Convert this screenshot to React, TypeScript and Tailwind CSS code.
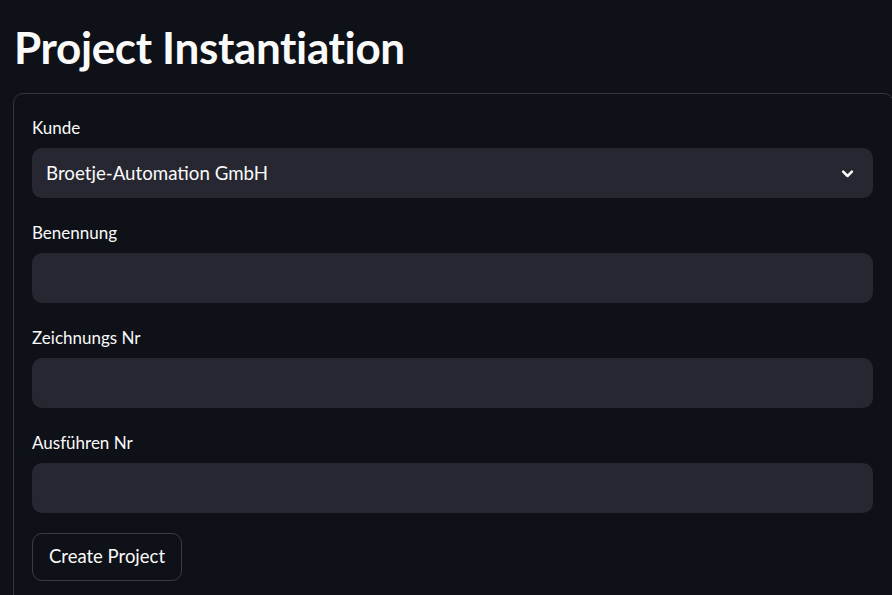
import React from "react";

function Field({ label }: { label: string }) {
  return (
    <div className="flex flex-col">
      <div className="h-[30px] flex items-center text-[17px] leading-none text-[#fafafa]">{label}</div>
      <div className="h-[50px] mt-[6px] rounded-[10px] bg-[#262730]" />
    </div>
  );
}

export default function App() {
  return (
    <div
      className="w-full min-h-[595px] bg-[#0e1117] overflow-hidden text-[#fafafa]"
      style={{ fontFamily: "Lato, 'Noto Sans', sans-serif" }}
    >
      <div className="pl-[13px]">
        <h1 className="h-[93px] pl-[1px] pt-[21px] text-[44px] font-bold leading-[52px] tracking-[-0.35px]">
          Project Instantiation
        </h1>
        <div className="w-[calc(100%+2px)] rounded-[10px] border border-[#35373d] pt-[18px] pl-[18px] pr-[20px] pb-[30px] flex flex-col gap-[19px]">
          <div className="flex flex-col">
            <div className="h-[30px] flex items-center text-[17px] leading-none">Kunde</div>
            <div className="h-[50px] mt-[6px] rounded-[10px] bg-[#262730] flex items-center justify-between pl-[14px] pr-[18px]">
              <span className="text-[18.7px]">Broetje-Automation GmbH</span>
              <svg width="15" height="15" viewBox="0 0 24 24" fill="none" stroke="#fafafa" strokeWidth="4" strokeLinecap="round" strokeLinejoin="round">
                <path d="M5 9l7 7 7-7" />
              </svg>
            </div>
          </div>
          <Field label="Benennung" />
          <Field label="Zeichnungs Nr" />
          <Field label="Ausführen Nr" />
          <div className="pt-[1px]">
            <button className="h-[48px] px-[16px] rounded-[10px] border border-[#3a3c44] bg-[#0e1117] text-[18.5px] text-[#fafafa]">
              Create Project
            </button>
          </div>
        </div>
      </div>
    </div>
  );
}
